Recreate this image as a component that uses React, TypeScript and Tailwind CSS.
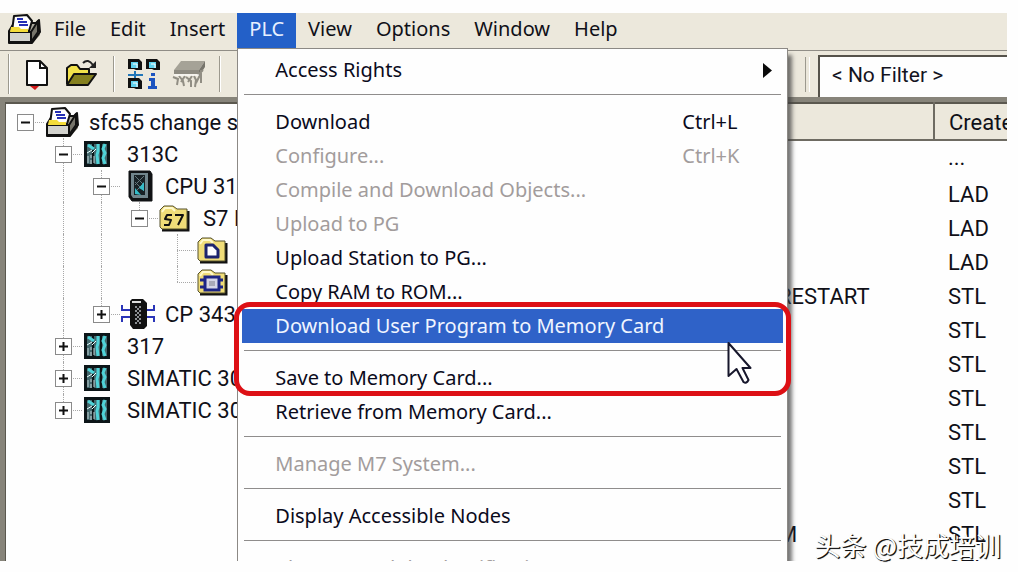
import React from "react";
import clsx from "clsx";

type MenuEntry = { label: string; shortcut?: string; disabled?: boolean; submenu?: boolean; active?: boolean };

type TreeNode = {
  label: string;
  icon: React.ReactNode;
  level: number;
  rails: number[];
  state?: "open" | "closed";
  last?: boolean;
  selected?: boolean;
};

const menuTitles = ["File", "Edit", "Insert", "PLC", "View", "Options", "Window", "Help"];

const rows = [
  { name: "", lang: "..." },
  { name: "", lang: "LAD" },
  { name: "", lang: "LAD" },
  { name: "", lang: "LAD" },
  { name: "RESTART", lang: "STL" },
  { name: "", lang: "STL" },
  { name: "", lang: "STL" },
  { name: "", lang: "STL" },
  { name: "", lang: "STL" },
  { name: "", lang: "STL" },
  { name: "", lang: "STL" },
  { name: "M", lang: "STL" },
  { name: "", lang: "STL" },
];

function ProjectIcon() {
  return (
    <svg width="36" height="32" viewBox="0 0 36 32" className="shrink-0" aria-hidden="true">
      <path d="M3 31h23l8-9v-4l-7 9H3z" fill="#8b8778" />
      <path d="M3 18l5-8h22l3-3 1 12-8 11H3z" fill="#a9a79c" stroke="#111" strokeWidth="2" strokeLinejoin="round" />
      <path d="M3 19h22v10H3z" fill="#d2d2cd" stroke="#111" strokeWidth="2" />
      <path d="M25 19l7-11v11l-7 10z" fill="#77756b" stroke="#111" strokeWidth="2" strokeLinejoin="round" />
      <path d="M8 3l13-1 5 6-3 10H6z" fill="#fff" stroke="#111" strokeWidth="2" strokeLinejoin="round" />
      <path d="M11 6h6M12 9h9M13 12h9" stroke="#2630b5" strokeWidth="2" />
      <path d="M5 14h8l2 2h7v3H4z" fill="#f4dc3a" />
    </svg>
  );
}

function StationIcon() {
  return (
    <svg width="36" height="32" viewBox="0 0 36 32" className="shrink-0" aria-hidden="true">
      <path d="M2 3h26v26H2z" fill="#0c1518" />
      <path d="M5 6h5v20H5zM12 6h6v20h-6zM20 6h5v20h-5z" fill="#43676c" />
      <path d="M6 7l6 4M16 6v7l-1 4 1 9M23 6l-2 5 2 4-2 5 2 6" stroke="#4fd3d8" strokeWidth="3" fill="none" />
      <path d="M6 18v7M9 17v3M9 22v4M12 18v7" stroke="#c6d6d8" strokeWidth="1" />
      <path d="M5 15l5-3M10 15l4-4" stroke="#e8ffff" strokeWidth="1" />
    </svg>
  );
}

function CpuIcon() {
  return (
    <svg width="36" height="32" viewBox="0 0 36 32" className="shrink-0" aria-hidden="true">
      <path d="M9 1h21l2 3v27H12l-3-4z" fill="#101214" stroke="#101214" strokeLinejoin="round" />
      <path d="M11 3h17v25H13l-2-3z" fill="#71858c" />
      <path d="M14 5h11v20H14z" fill="#182125" />
      <path d="M15 6l9 9M15 12l9 9M24 6l-9 9M24 13l-9 9" stroke="#65777c" strokeWidth="1" />
      <path d="M24 12v9l-5-3zM15 18v6l6 1z" fill="#36bcc8" />
    </svg>
  );
}

function CpIcon() {
  return (
    <svg width="36" height="32" viewBox="0 0 36 32" className="shrink-0" aria-hidden="true">
      <path d="M2 7v5h8M2 24v-5h8M34 7v5h-8M34 24v-5h-8" stroke="#2a35b8" strokeWidth="2" fill="none" />
      <path d="M12 1h11l4 4v23l-3 3H13l-3-4V3z" fill="#111" />
      <path d="M12 4h9" stroke="#ddd" strokeWidth="2" />
      <path d="M16 8v18M20 8v18" stroke="#8d9094" strokeWidth="2" strokeDasharray="2 2" />
      <path d="M18 10v16" stroke="#8d9094" strokeWidth="2" strokeDasharray="2 2" />
    </svg>
  );
}

function FolderIcon({ kind }: { kind: "s7" | "source" | "blocks" }) {
  return (
    <svg width="36" height="32" viewBox="0 0 36 32" className="shrink-0" aria-hidden="true">
      <path d="M4 28h26V9" stroke="#111" strokeWidth="3" fill="none" />
      <path d="M2 8l4-4h9l4 3h10v20H4l-2-2z" fill="#f0dd78" stroke="#55502c" strokeWidth="1" strokeLinejoin="round" />
      <path d="M4 10l3-4h7l3 3" stroke="#fff9cc" strokeWidth="2" fill="none" />
      {kind === "s7" && (
        <path d="M14 13h-5l-2 4 6 1-2 5H6M17 13h8l-5 10" stroke="#111" strokeWidth="2" fill="none" strokeLinejoin="round" />
      )}
      {kind === "source" && (
        <path d="M10 11h7l5 5v7H10z" fill="#fff" stroke="#1d246e" strokeWidth="3" strokeLinejoin="round" />
      )}
      {kind === "blocks" && (
        <>
          <path d="M4 14h5M4 21h5M22 14h5M22 21h5" stroke="#1d2585" strokeWidth="3" />
          <path d="M9 11h14v13H9z" fill="#d5d5e6" stroke="#1d2585" strokeWidth="3" />
          <path d="M13 15h6v5h-6z" fill="#a9a9b8" />
        </>
      )}
    </svg>
  );
}

const tree: TreeNode[] = [
  { label: "sfc55 change sm", icon: <ProjectIcon />, level: 0, rails: [], state: "open" },
  { label: "313C", icon: <StationIcon />, level: 1, rails: [], state: "open" },
  { label: "CPU 313C", icon: <CpuIcon />, level: 2, rails: [1], state: "open" },
  { label: "S7 Program", icon: <FolderIcon kind="s7" />, level: 3, rails: [1, 2], state: "open", last: true },
  { label: "Sources", icon: <FolderIcon kind="source" />, level: 4, rails: [1, 2] },
  { label: "Blocks", icon: <FolderIcon kind="blocks" />, level: 4, rails: [1, 2], last: true, selected: true },
  { label: "CP 343", icon: <CpIcon />, level: 2, rails: [1], state: "closed", last: true },
  { label: "317", icon: <StationIcon />, level: 1, rails: [], state: "closed" },
  { label: "SIMATIC 300", icon: <StationIcon />, level: 1, rails: [], state: "closed" },
  { label: "SIMATIC 300", icon: <StationIcon />, level: 1, rails: [], state: "closed", last: true },
];

function Rail({ shown }: { shown: boolean }) {
  return (
    <span className="flex h-8 w-[38px] shrink-0 justify-center">
      {shown && <span className="h-8 w-px border-l border-dotted border-[#a8a8a8]" />}
    </span>
  );
}

function TreeRow({ node }: { node: TreeNode }) {
  const spacers = Array.from({ length: node.level }, (_, i) => i);
  return (
    <li className="flex h-8 items-center whitespace-nowrap">
      {spacers.map((i) => (
        <Rail key={i} shown={node.rails.includes(i)} />
      ))}
      <span className="relative flex h-8 w-[38px] shrink-0 items-center justify-center">
        {node.level > 0 && (
          <span
            className={clsx(
              "absolute top-0 left-[19px] border-l border-dotted border-[#a8a8a8]",
              node.last ? "h-4" : "h-8"
            )}
          />
        )}
        <span className="absolute top-4 right-0 left-[19px] border-t border-dotted border-[#a8a8a8]" />
        {node.state && (
          <button
            aria-label={node.state === "open" ? "Collapse" : "Expand"}
            className="relative flex size-[17px] items-center justify-center border border-[#8a8a8a] bg-white"
          >
            <svg width="9" height="9" viewBox="0 0 9 9" aria-hidden="true">
              <path d={node.state === "open" ? "M0 4.5h9" : "M0 4.5h9M4.500 0v9"} stroke="#111" strokeWidth="2" />
            </svg>
          </button>
        )}
      </span>
      {node.icon}
      <span className={clsx(node.selected ? "ml-[5px] border-l-2 border-dotted border-[#5a2a12] pl-1" : "ml-[9px]")}>
        {node.label}
      </span>
    </li>
  );
}

function MenuItem({ item }: { item: MenuEntry }) {
  return (
    <button
      disabled={item.disabled}
      className={clsx(
        "flex h-[34px] w-full items-center justify-between pr-[11px] pl-[33px] text-left whitespace-nowrap",
        item.active && "bg-[#2f62c8] text-[#f0f5ff]",
        item.disabled && "text-[#a29c9c]"
      )}
    >
      <span>{item.label}</span>
      {item.shortcut && <span className="w-[90px]">{item.shortcut}</span>}
      {item.submenu && (
        <svg width="9" height="15" viewBox="0 0 9 15" aria-hidden="true">
          <path d="M0 0l9 7.500L0 15z" fill="#0a0a0a" />
        </svg>
      )}
    </button>
  );
}

function Divider() {
  return (
    <div className="mx-0.5 flex h-[18px] items-center pb-1">
      <hr className="w-full border-t border-[#8f8d8c]" />
    </div>
  );
}

function PlcMenu() {
  return (
    <div className="absolute top-[35px] left-0 z-10 w-[551px] border border-[#8c8985] bg-[#fefefe] p-1 text-[#0b0b1c] shadow-[5px_6px_4px_-1px_rgba(60,60,60,0.7)]">
      <MenuItem item={{ label: "Access Rights", submenu: true }} />
      <Divider />
      <MenuItem item={{ label: "Download", shortcut: "Ctrl+L" }} />
      <MenuItem item={{ label: "Configure...", shortcut: "Ctrl+K", disabled: true }} />
      <MenuItem item={{ label: "Compile and Download Objects...", disabled: true }} />
      <MenuItem item={{ label: "Upload to PG", disabled: true }} />
      <MenuItem item={{ label: "Upload Station to PG..." }} />
      <MenuItem item={{ label: "Copy RAM to ROM..." }} />
      <div className="relative">
        <MenuItem item={{ label: "Download User Program to Memory Card", active: true }} />
        <Divider />
        <MenuItem item={{ label: "Save to Memory Card..." }} />
        <div className="pointer-events-none absolute -inset-x-2 -top-[7px] -bottom-px rounded-2xl border-[5px] border-[#dd1015]" />
        <svg className="absolute top-8 right-[31px]" width="25" height="44" viewBox="0 0 25 44" aria-hidden="true">
          <path
            d="M1.500 2v33l8-7 7 13q3 2 5-2l-6-12h8z"
            fill="#fff"
            stroke="#17172c"
            strokeWidth="2"
            strokeLinejoin="round"
          />
        </svg>
      </div>
      <MenuItem item={{ label: "Retrieve from Memory Card..." }} />
      <Divider />
      <MenuItem item={{ label: "Manage M7 System...", disabled: true }} />
      <Divider />
      <MenuItem item={{ label: "Display Accessible Nodes" }} />
      <Divider />
      <MenuItem item={{ label: "Change Module Identification...", disabled: true }} />
    </div>
  );
}

function Toolbar() {
  return (
    <div className="flex h-[47px] items-center border-t border-[#908d86] bg-[#ece8dc]">
      <span className="ml-2 h-10 w-0.5 border-l border-[#9c998e] bg-white" />
      <button aria-label="New" className="ml-4">
        <svg width="22" height="32" viewBox="0 0 22 32">
          <path d="M1 3h13l7 7v17H1z" fill="#fff" stroke="#111" strokeWidth="2" strokeLinejoin="round" />
          <path d="M14 3v7h7" fill="none" stroke="#111" strokeWidth="2" />
          <path d="M4 28h9l-4 4z" fill="#d21818" />
        </svg>
      </button>
      <button aria-label="Open" className="ml-[17px]">
        <svg width="33" height="32" viewBox="0 0 33 32">
          <path d="M2 26V10l4-3h6l3 4h9v6" fill="#f2e24b" stroke="#111" strokeWidth="2" strokeLinejoin="round" />
          <path d="M2 27l7-11h22l-8 11z" fill="#85801f" stroke="#111" strokeWidth="2" strokeLinejoin="round" />
          <path d="M18 5q5-5 10 2" fill="none" stroke="#222" strokeWidth="2" />
          <path d="M31 3v7h-7z" fill="#222" />
        </svg>
      </button>
      <span className="ml-[15px] h-9 w-0.5 border-l border-[#9c998e] bg-white" />
      <button aria-label="Accessible nodes" className="ml-3">
        <svg width="33" height="32" viewBox="0 0 33 32">
          <path d="M8 13v8M1 17h15" stroke="#2176b8" strokeWidth="2" />
          {[
            [1, 1],
            [19, 1],
            [1, 20],
          ].map(([x, y]) => (
            <g key={`${x}-${y}`}>
              <path d={`M${x} ${y}h11l3 3v8H${x + 8}l-2-1H${x}z`} fill="#111" />
              <path d={`M${x + 3} ${y + 3}h7v6h-7z`} fill="#60d2ee" />
              <path d={`M${x + 5} ${y + 5}h4v4`} stroke="#fff" strokeWidth="1" fill="none" />
            </g>
          ))}
          <path d="M24 15h4v3h-4zM22 20h6v8h2v3h-9v-3h3v-5h-2z" fill="#1d54c0" />
        </svg>
      </button>
      <button aria-label="Memory card" className="ml-3" disabled>
        <svg width="33" height="32" viewBox="0 0 33 32">
          <path d="M9 3h24l-6 9H2z" fill="#a5a297" />
          <path d="M2 12h25v4H2z" fill="#8e8b81" />
          <path d="M27 12l6-9v6l-6 9z" fill="#77756c" />
          <path
            d="M1 19l5 2-1 6M7 18l4 5 1 5M13 18l-4 6M14 19l5 4v6M20 18l-4 6M22 18l2 4-1 7M28 17l-4 8M29 12v13M26 17l5-5"
            stroke="#918e84"
            strokeWidth="2"
            fill="none"
          />
          <path d="M2 17h25" stroke="#fff" strokeWidth="1" />
        </svg>
      </button>
      <span className="ml-[14px] h-9 w-0.5 border-l border-[#9c998e] bg-white" />
      <div className="ml-auto flex h-full w-[202px] items-end gap-2">
        <span className="mb-[5px] h-[35px] w-[5px] border-x border-l-[#9c998e] border-r-white" />
        <select
          aria-label="Filter"
          className="h-[42px] flex-1 appearance-none border-t-2 border-l-2 border-[#55524a] bg-[#fefefe] pb-0.5 pl-3 font-['Roboto','Liberation_Sans',sans-serif] text-[21px] text-[#14141f]"
        >
          <option>&lt; No Filter &gt;</option>
        </select>
      </div>
    </div>
  );
}

export default function App() {
  return (
    <div className="h-screen bg-[#fefefe] pt-[13px] pr-[11px] pb-[11px] font-['Noto_Sans','Open_Sans',sans-serif] text-[20px] text-[#101018]">
      <div className="relative flex h-full flex-col overflow-hidden">
        <nav className="flex h-[37px] shrink-0 items-start bg-[#ece8dc] pl-1.5">
          <ProjectIcon />
          {menuTitles.map((title) => (
            <div key={title} className="relative h-full">
              <button
                className={clsx("h-9 px-3 pb-1", title === "PLC" && "bg-[#2360c8] text-[#e8f0ff]")}
              >
                {title}
              </button>
              {title === "PLC" && <PlcMenu />}
            </div>
          ))}
        </nav>
        <Toolbar />
        <main className="flex min-h-0 flex-1 font-['Roboto','Liberation_Sans',sans-serif] text-[22px]">
          <section className="flex-1 overflow-hidden border-t-[5px] border-l-[5px] border-[#87847a]">
            <div className="h-full border-t-2 border-l border-[#5b584f] bg-[#fefefe] pt-0.5">
              <ul>
                {tree.map((node, i) => (
                  <TreeRow key={i} node={node} />
                ))}
              </ul>
            </div>
          </section>
          <section className="w-[245px] overflow-hidden border-t-[5px] border-[#87847a]">
            <table className="w-full table-fixed border-collapse border-t-2 border-[#5b584f] bg-[#fefefe] text-left">
              <thead>
                <tr className="h-9 border-b-2 border-[#6e6b62] bg-[#ece8dc]">
                  <th aria-label="Name" />
                  <th className="w-[73px] overflow-hidden border-l-2 border-[#6e6b62] pt-0.5 pl-3.5 font-normal">
                    Created
                  </th>
                </tr>
              </thead>
              <tbody>
                {rows.map((row, i) => (
                  <tr key={i} className="h-[34px]">
                    <td className="pt-2 pl-4 leading-6">{row.name}</td>
                    <td className={clsx("pl-3.5 leading-6", i > 0 && "pt-2")}>{row.lang}</td>
                  </tr>
                ))}
              </tbody>
            </table>
          </section>
        </main>
      </div>
      <p className="absolute right-[17px] bottom-2 z-20 font-['Noto_Sans_CJK_SC',sans-serif] text-[26px] whitespace-nowrap text-white [text-shadow:1px_1px_1px_#111,1px_1px_0_#222]">
        头条 @技成培训
      </p>
    </div>
  );
}
